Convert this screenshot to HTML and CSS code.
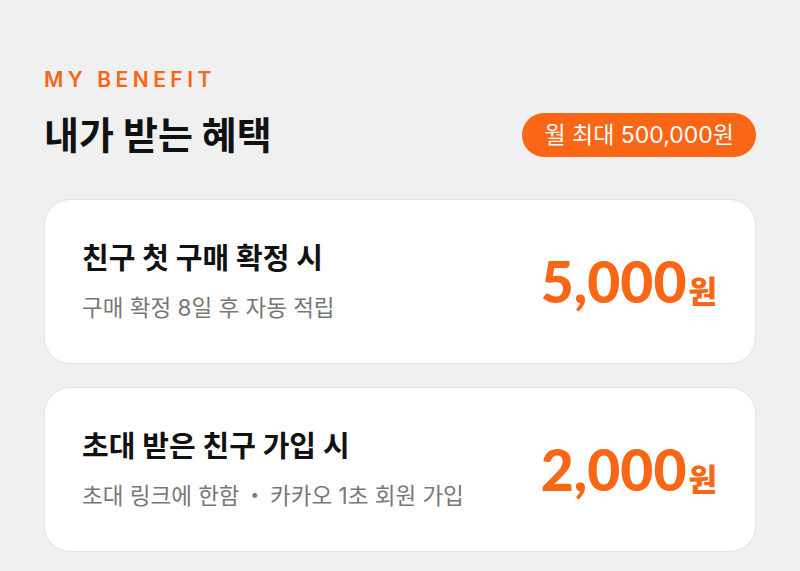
FILE: index.html
```html
<!DOCTYPE html>
<html lang="ko">
<head>
    <meta charset="utf-8" />
    <title>My Benefit</title>
    <meta name="viewport" content="width=device-width, initial-scale=1.0">
    <link rel="stylesheet" href="styles.css">
</head>
<body>

<section class="benefit">
    <div class="eyebrow">MY BENEFIT</div>
    <div class="benefit-head">
        <h1 class="benefit-title">내가 받는 혜택</h1>
        <span class="badge">월 최대 500,000원</span>
    </div>

    <div class="card">
        <div class="card-text">
            <div class="card-title">친구 첫 구매 확정 시</div>
            <div class="card-desc">구매 확정 8일 후 자동 적립</div>
        </div>
        <div class="amount">5,000<span class="unit">원</span></div>
    </div>

    <div class="card">
        <div class="card-text">
            <div class="card-title">초대 받은 친구 가입 시</div>
            <div class="card-desc">초대 링크에 한함<span class="dot">・</span>카카오 1초 회원 가입</div>
        </div>
        <div class="amount">2,000<span class="unit">원</span></div>
    </div>
</section>

</body>
</html>
```

FILE: styles.css
```css
* {
    margin: 0;
    padding: 0;
    box-sizing: border-box;
}

body {
    font-family: Inter, "Noto Sans CJK KR", sans-serif;
    background-color: #f0f0f0;
    color: #111;
    height: 100vh;
    overflow: hidden;
}

.benefit {
    padding: 67px 44px 0 44px;
}

.eyebrow {
    font-size: 21px;
    font-weight: 600;
    letter-spacing: 4.5px;
    color: #f96616;
    line-height: 26px;
}

.benefit-head {
    display: flex;
    justify-content: space-between;
    align-items: center;
    margin-top: 20px;
    margin-bottom: 42px;
}

.benefit-title {
    font-size: 38px;
    font-weight: 700;
    line-height: 44px;
}

.badge {
    background-color: #f96616;
    color: #fff;
    font-size: 23px;
    line-height: 44px;
    height: 44px;
    padding: 0 22px;
    border-radius: 22px;
}

.card {
    display: flex;
    justify-content: space-between;
    align-items: center;
    background: #fff;
    border: 1px solid #e3e3e3;
    border-radius: 26px;
    height: 165px;
    padding: 0 38px 0 37px;
    margin-bottom: 23px;
}

.card-title {
    font-size: 29px;
    font-weight: 700;
    line-height: 36px;
}

.card-desc {
    font-size: 22.5px;
    color: #777;
    line-height: 30px;
    margin-top: 16px;
}

.card-desc .dot {
    margin: 0 4px;
}

.amount {
    font-family: Lato, Inter, sans-serif;
    font-weight: 900;
    font-size: 57px;
    line-height: 1;
    color: #f96616;
}

.amount .unit {
    font-family: Inter, "Noto Sans CJK KR", sans-serif;
    font-weight: 800;
    font-size: 31px;
    line-height: 1;
    margin-left: 2px;
}
```
